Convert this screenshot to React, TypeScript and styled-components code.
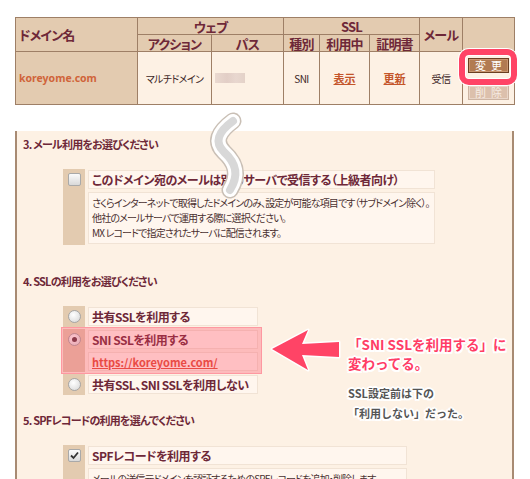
import React from 'react';
import styled, { createGlobalStyle } from 'styled-components';

const Global = createGlobalStyle`
  html, body { margin: 0; padding: 0; background: #ffffff; }
  body { font-family: "Noto Sans CJK JP", "Noto Sans", sans-serif; }
  * { box-sizing: border-box; }
`;

const JP = `"Noto Sans CJK JP", "Noto Sans", sans-serif`;

const Page = styled.div`
  position: relative;
  width: 530px;
  height: 479px;
  overflow: hidden;
  padding-top: 17px;
  font-family: ${JP};
  font-feature-settings: "palt";
`;

/* ---------- Table ---------- */
const Table = styled.table`
  margin-left: 15px;
  width: 499px;
  border-collapse: collapse;
  table-layout: fixed;
`;

const Th = styled.th<{ $align?: 'left' | 'center' }>`
  background: #e3cbb0;
  border: 1px solid #9e7f66;
  color: #6e2838;
  font-size: 13px;
  letter-spacing: -0.8px;
  font-weight: bold;
  height: 17px;
  padding: 0 0 0 ${p => (p.$align === 'left' ? '3px' : '0')};
  line-height: 15px;
  text-align: ${p => p.$align ?? 'center'};
  white-space: nowrap;
`;

const Td = styled.td<{ $beige?: boolean }>`
  background: ${p => (p.$beige ? '#e3cbb0' : '#fdf1e4')};
  border: 1px solid #9e7f66;
  height: 53px;
  padding: 0;
  text-align: center;
  font-size: 10px;
  letter-spacing: -0.6px;
  color: #3c2626;
  white-space: nowrap;
`;

const DomainLink = styled.span`
  display: block;
  text-align: left;
  padding-left: 3px;
  color: #d0643a;
  font-family: "Noto Sans", sans-serif;
  font-weight: bold;
  font-size: 10.5px;
  letter-spacing: 0;
`;

const Blur = styled.span`
  display: block;
  margin-left: 3px;
  width: 30px;
  height: 10px;
  background: linear-gradient(90deg, #ead9d0, #e2cec6 40%, #e8d7cf 70%, #e4d2c8);
`;

const CellLink = styled.a`
  color: #c4552a;
  font-weight: bold;
  font-size: 11px;
  letter-spacing: 0;
  text-decoration: underline;
`;

const ButtonStack = styled.div`
  display: flex;
  flex-direction: column;
  align-items: center;
  gap: 12px;
  padding-top: 1px;
`;

const Highlighted = styled.div`
  position: relative;
  &::after {
    content: '';
    position: absolute;
    left: -9px;
    right: -8px;
    top: -9px;
    bottom: -12px;
    border: 6px solid #ff4466;
    border-radius: 10px;
    box-shadow: 0 0 0 1px #ffffff, inset 0 0 0 1px #ffffff;
    pointer-events: none;
  }
`;

const Btn = styled.button<{ $faded?: boolean }>`
  display: block;
  width: 41px;
  height: 15px;
  padding: 0;
  border: 1px solid ${p => (p.$faded ? '#cdb4a2' : '#6b3f22')};
  background: ${p => (p.$faded ? '#dcc0ac' : '#b27b52')};
  box-shadow: inset 0 0 0 1px ${p => (p.$faded ? '#e9d6c8' : '#c99670')};
  color: ${p => (p.$faded ? '#f6ece4' : '#ffffff')};
  font-family: ${JP};
  font-size: 11px;
  line-height: 13px;
  letter-spacing: 5px;
  text-indent: 5px;
  cursor: pointer;
`;

/* ---------- Panel ---------- */
const Panel = styled.div`
  margin: 26px 0 0 15px;
  width: 499px;
  height: 360px;
  border-left: 2px solid #a88b73;
  border-right: 2px solid #a88b73;
  background: #fdf1e4;
  padding: 5px 0 0 6px;
`;

const Heading = styled.div<{ $mt: number }>`
  margin-top: ${p => p.$mt}px;
  margin-bottom: 17px;
  height: 16px;
  line-height: 16px;
  font-size: 11px;
  letter-spacing: -0.8px;
  font-weight: bold;
  color: #6e2838;
  white-space: nowrap;
`;

const Options = styled.div`
  margin-left: 40px;
  display: flex;
  flex-direction: column;
  align-items: flex-start;
  gap: 2px;
`;

const Row = styled.div<{ $marked?: boolean }>`
  position: relative;
  display: flex;
  gap: 3px;
  ${p =>
    p.$marked
      ? `&::after {
      content: '';
      position: absolute;
      left: -2px; right: -4px; top: -2px; bottom: -2px;
      background: rgba(255, 62, 92, 0.3);
      border: 1px solid rgba(255, 110, 130, 0.45);
      pointer-events: none;
    }`
      : ''}
`;

const LeftCell = styled.div`
  width: 22px;
  flex: none;
  background: #e3cbb0;
  display: flex;
  justify-content: center;
  padding-top: 4px;
`;

const Content = styled.div<{ $w: number }>`
  width: ${p => p.$w}px;
  display: flex;
  flex-direction: column;
  gap: 3px;
  padding: 1px 0;
`;

const LabelBox = styled.div`
  height: 19px;
  border: 1px solid #f1e3d5;
  background: #fff6ee;
  padding: 0 3px;
  line-height: 17px;
  font-size: 12px;
  letter-spacing: -0.5px;
  font-weight: bold;
  color: #6e2838;
  white-space: nowrap;
`;

const DescBox = styled.div`
  border: 1px solid #f1e3d5;
  background: #fff6ee;
  padding: 2px 3px 3px;
  font-size: 10px;
  letter-spacing: -0.85px;
  line-height: 15px;
  color: #4a3030;
  white-space: nowrap;
  overflow: hidden;
`;

const UrlLink = styled.a`
  color: #e0503a;
  font-weight: bold;
  font-size: 11px;
  letter-spacing: 0;
  text-decoration: underline;
`;

const Check = styled.span`
  width: 13px;
  height: 13px;
  border: 1px solid #a9a9a9;
  border-radius: 2px;
  background: linear-gradient(#fbfbfb, #d9d9d9);
  display: flex;
  align-items: center;
  justify-content: center;
`;

const Radio = styled.span<{ $on?: boolean }>`
  width: 13px;
  height: 13px;
  border: 1px solid #a5a5a5;
  border-radius: 50%;
  background: radial-gradient(circle at 40% 35%, #ffffff, #d5d5d5);
  display: flex;
  align-items: center;
  justify-content: center;
  &::before {
    content: '';
    width: 5px;
    height: 5px;
    border-radius: 50%;
    background: ${p => (p.$on ? '#5b3a42' : 'transparent')};
  }
`;

/* ---------- Overlays ---------- */
const Overlay = styled.svg`
  position: absolute;
  pointer-events: none;
`;

const Note = styled.div<{ $x: number; $y: number; $pink?: boolean }>`
  position: absolute;
  left: ${p => p.$x}px;
  top: ${p => p.$y}px;
  font-size: ${p => (p.$pink ? '13.5px' : '11px')};
  line-height: ${p => (p.$pink ? '19px' : '20px')};
  font-weight: bold;
  font-feature-settings: normal;
  color: ${p => (p.$pink ? '#ff3d66' : '#555555')};
  white-space: nowrap;
  text-shadow: 2px 0 0 #fff, -2px 0 0 #fff, 0 2px 0 #fff, 0 -2px 0 #fff,
    1.5px 1.5px 0 #fff, -1.5px 1.5px 0 #fff, 1.5px -1.5px 0 #fff, -1.5px -1.5px 0 #fff;
`;

export default function App() {
  return (
    <Page>
      <Global />
      <Table>
        <colgroup>
          <col style={{ width: 122 }} />
          <col style={{ width: 74 }} />
          <col style={{ width: 72 }} />
          <col style={{ width: 36 }} />
          <col style={{ width: 50 }} />
          <col style={{ width: 50 }} />
          <col style={{ width: 43 }} />
          <col style={{ width: 52 }} />
        </colgroup>
        <thead>
          <tr>
            <Th rowSpan={2} $align="left">ドメイン名</Th>
            <Th colSpan={2}>ウェブ</Th>
            <Th colSpan={3}>SSL</Th>
            <Th rowSpan={2}>メール</Th>
            <Th rowSpan={2}></Th>
          </tr>
          <tr>
            <Th>アクション</Th>
            <Th>パス</Th>
            <Th>種別</Th>
            <Th>利用中</Th>
            <Th>証明書</Th>
          </tr>
        </thead>
        <tbody>
          <tr>
            <Td $beige><DomainLink>koreyome.com</DomainLink></Td>
            <Td>マルチドメイン</Td>
            <Td><Blur /></Td>
            <Td>SNI</Td>
            <Td><CellLink>表示</CellLink></Td>
            <Td><CellLink>更新</CellLink></Td>
            <Td>受信</Td>
            <Td>
              <ButtonStack>
                <Highlighted><Btn>変更</Btn></Highlighted>
                <Btn $faded>削除</Btn>
              </ButtonStack>
            </Td>
          </tr>
        </tbody>
      </Table>

      <Panel>
        <Heading $mt={0}>3. メール利用をお選びください</Heading>
        <Options>
          <Row>
            <LeftCell><Check /></LeftCell>
            <Content $w={347}>
              <LabelBox>このドメイン宛のメールは別のサーバで受信する（上級者向け）</LabelBox>
              <DescBox>
                さくらインターネットで取得したドメインのみ、設定が可能な項目です（サブドメイン除く）。<br />
                他社のメールサーバで運用する際に選択ください。<br />
                MX レコードで指定されたサーバに配信されます。
              </DescBox>
            </Content>
          </Row>
        </Options>

        <Heading $mt={28}>4. SSLの利用をお選びください</Heading>
        <Options>
          <Row>
            <LeftCell><Radio /></LeftCell>
            <Content $w={170}>
              <LabelBox>共有SSLを利用する</LabelBox>
            </Content>
          </Row>
          <Row $marked>
            <LeftCell><Radio $on /></LeftCell>
            <Content $w={170}>
              <LabelBox>SNI SSLを利用する</LabelBox>
              <LabelBox><UrlLink>https://koreyome.com/</UrlLink></LabelBox>
            </Content>
          </Row>
          <Row>
            <LeftCell><Radio /></LeftCell>
            <Content $w={170}>
              <LabelBox>共有SSL、SNI SSLを利用しない</LabelBox>
            </Content>
          </Row>
        </Options>

        <Heading $mt={17}>5. SPFレコードの利用を選んでください</Heading>
        <Options>
          <Row>
            <LeftCell>
              <Check>
                <svg width="9" height="9" viewBox="0 0 9 9">
                  <path d="M1 4.5 L3.5 7 L8 1.5" fill="none" stroke="#333" strokeWidth="1.8" />
                </svg>
              </Check>
            </LeftCell>
            <Content $w={319}>
              <LabelBox>SPFレコードを利用する</LabelBox>
              <DescBox>メールの送信元ドメインを認証するためのSPFレコードを追加・削除します。</DescBox>
            </Content>
          </Row>
        </Options>
      </Panel>

      {/* omission squiggle */}
      <Overlay style={{ left: 200, top: 108 }} width="60" height="92" viewBox="200 108 60 92">
        <path d="M233 121 C 218 132, 214 142, 224 152 C 235 162, 240 174, 230 190" fill="none" stroke="#c9bfb5" strokeWidth="17" strokeLinecap="round" />
        <path d="M233 121 C 218 132, 214 142, 224 152 C 235 162, 240 174, 230 190" fill="none" stroke="#ffffff" strokeWidth="14" strokeLinecap="round" />
        <path d="M233 121 C 218 132, 214 142, 224 152 C 235 162, 240 174, 230 190" fill="none" stroke="#d8d8d8" strokeWidth="8" strokeLinecap="round" />
      </Overlay>

      {/* arrow */}
      <Overlay style={{ left: 266, top: 324 }} width="80" height="54" viewBox="266 324 80 54">
        <path d="M272 349 L308 330 L302 344 L339 342 L339 357 L302 355 L308 370 Z" fill="#ff4466" stroke="#ffffff" strokeWidth="3" strokeLinejoin="round" paintOrder="stroke" />
      </Overlay>

      <Note $x={348} $y={335} $pink>
        「SNI SSLを利用する」に<br />変わってる。
      </Note>
      <Note $x={348} $y={383}>
        SSL設定前は下の<br />「利用しない」だった。
      </Note>
    </Page>
  );
}
